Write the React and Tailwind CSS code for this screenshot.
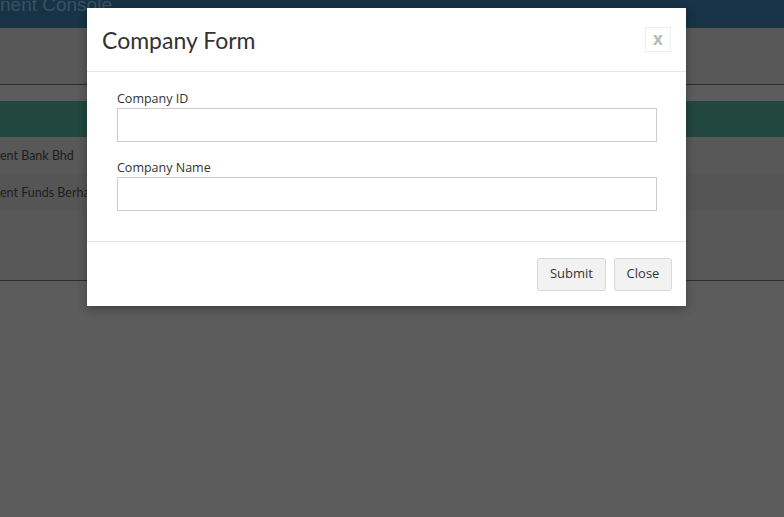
export default function App() {
  return (
    <div className="relative w-[784px] h-[517px] overflow-hidden bg-[#5d5d5d]" style={{ fontFamily: '"Open Sans", "Noto Sans", sans-serif' }}>
      {/* dimmed page behind */}
      <div className="h-[28px] bg-[#183246] overflow-hidden">
        <div className="-mt-[6px] text-[19px] leading-[22px] text-[#3a5163]" style={{ fontFamily: '"Liberation Sans", Arial, sans-serif' }}>nent Console</div>
      </div>
      <div className="h-[56px] bg-[#585858]" />
      <div className="h-[1px] bg-[#252d37]" />
      <div className="h-[16px] bg-[#5c5c5c]" />
      <div className="h-[36px] bg-[#21473f]" />
      <div className="h-[37px] bg-[#585858] flex items-center pt-[1px] text-[12.5px] text-[#1e1e1e]" style={{ fontFamily: 'Lato, sans-serif' }}>ent Bank Bhd</div>
      <div className="h-[37px] bg-[#555555] flex items-center pt-[1px] text-[12.5px] text-[#1e1e1e]" style={{ fontFamily: 'Lato, sans-serif' }}>ent Funds Berhad</div>
      <div className="h-[69px] bg-[#585858]" />
      <div className="h-[1px] bg-[#252d37]" />
      <div className="h-[236px] bg-[#5c5c5c]" />

      {/* modal */}
      <div className="absolute left-[87px] top-[8px] w-[599px] bg-white shadow-[0_3px_9px_rgba(0,0,0,0.3)]">
        <div className="h-[64px] border-b border-[#e5e5e5] flex items-center justify-between pl-[15px] pr-[15px]">
          <div className="text-[23px] text-[#333] pt-[1px]" style={{ fontFamily: 'Lato, sans-serif' }}>Company Form</div>
          <div className="w-[26px] h-[25px] border border-[#eeeeee] flex items-center justify-center text-[17px] font-bold text-[#bbbbbb] leading-none pb-[2px]">x</div>
        </div>
        <div className="px-[30px] pt-[18px] pb-[30px]">
          <div className="text-[12.5px] text-[#333] leading-[17px] mb-[1px]">Company ID</div>
          <div className="h-[34px] w-[540px] border border-[#cccccc]" />
          <div className="text-[12.5px] text-[#333] leading-[17px] mt-[17px] mb-[1px]">Company Name</div>
          <div className="h-[34px] w-[540px] border border-[#cccccc]" />
        </div>
        <div className="border-t border-[#e5e5e5] h-[65px] flex items-center justify-end gap-[8px] pr-[14px]">
          <div className="w-[69px] h-[33px] rounded-[3px] border border-[#d8d8d8] bg-[#f2f2f2] flex items-center justify-center text-[13px] text-[#333]">Submit</div>
          <div className="w-[58px] h-[33px] rounded-[3px] border border-[#d8d8d8] bg-[#f2f2f2] flex items-center justify-center text-[13px] text-[#333]">Close</div>
        </div>
      </div>
    </div>
  );
}
